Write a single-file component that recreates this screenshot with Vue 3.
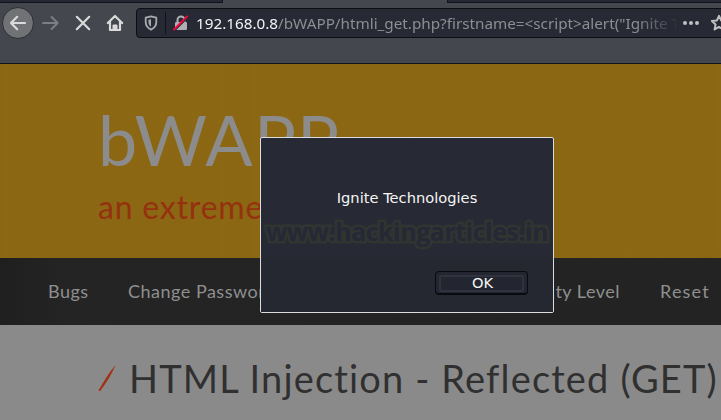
<template>
  <div class="screen">
    <div class="browser">
      <div class="tabs">
        <div class="tab"></div>
        <div class="tab active"></div>
        <div class="tab rest"></div>
      </div>
      <div class="toolbar">
        <button class="back">
          <svg width="18" height="16" viewBox="0 0 18 16">
            <path d="M16 8H2M8.2 1.8 2 8l6.2 6.2" />
          </svg>
        </button>
        <svg class="forward" width="18" height="16" viewBox="0 0 18 16">
          <path d="M1 8h14.6M9.6 2l6 6-6 6" />
        </svg>
        <svg class="stop" width="16" height="16" viewBox="0 0 16 16">
          <path d="M1.8 1.8l12.4 12.4M14.2 1.8 1.8 14.2" />
        </svg>
        <svg class="home" width="18" height="18" viewBox="0 0 18 18">
          <path d="M1.8 9 9 2l7.2 7M4 8v8h10V8" />
          <path class="door" d="M7 16v-5h4v5z" />
        </svg>
        <div class="urlbar">
          <svg class="shield" width="14" height="16" viewBox="0 0 14 16">
            <path class="line" d="M7 1.3 12.3 2.6V7c0 3.6-2 6-5.3 7.6C3.7 13 1.7 10.6 1.7 7V2.6z" />
            <path class="fill" d="M7 4.2v7.6C5.2 10.7 4.5 9 4.5 7V4.8z" />
          </svg>
          <span class="divider"></span>
          <svg class="lock" width="16" height="16" viewBox="0 0 16 16">
            <path class="shackle" d="M4.5 8V5a3.5 3.5 0 0 1 7 0v3" />
            <rect x="2" y="7" width="12" height="8" rx="1.2" />
            <path class="gap" d="M.6 16.2 15.6 1.2" />
            <path class="slash" d="M1 14.5 14.2 1.3" />
          </svg>
          <span class="url"><b>192.168.0.8</b>/bWAPP/htmli_get.php?firstname=&lt;script&gt;alert("Ignite T</span>
          <span class="dots"><i></i><i></i><i></i></span>
          <svg class="star" width="18" height="18" viewBox="0 0 18 18">
            <path d="M9 1.8 11.1 6.4l5 .6-3.7 3.4 1 5L9 12.9l-4.4 2.5 1-5L1.9 7l5-.6z" />
          </svg>
        </div>
      </div>
    </div>

    <header class="banner">
      <h1>bWAPP</h1>
      <p>an extremely buggy web app !</p>
    </header>

    <nav class="menu">
      <a v-for="item in menu" :key="item">{{ item }}</a>
    </nav>

    <main class="content">
      <svg width="18" height="28" viewBox="0 0 18 28">
        <path d="M.5 26.500C5 19 10.500 9 17.500 1 14 10 8 19 2 27.200z" />
      </svg>
      <h2>HTML Injection - Reflected (GET)</h2>
    </main>

    <div class="dialog">
      <div class="message">Ignite Technologies</div>
      <div class="watermark">www.hackingarticles.in</div>
      <div class="actions">
        <button class="ok"><span>OK</span></button>
      </div>
    </div>
  </div>
</template>

<script setup>
const menu = ['Bugs', 'Change Password', 'Create User', 'Set Security Level', 'Reset']
</script>

<style>
body {
  margin: 0;
  overflow: hidden;
}
</style>

<style scoped>
.screen {
  position: relative;
  width: 721px;
  height: 420px;
  overflow: hidden;
  font-family: Lato, 'Open Sans', sans-serif;
}

button {
  padding: 0;
  box-sizing: border-box;
}

svg {
  display: block;
  flex: none;
  fill: none;
  stroke-linecap: round;
  stroke-linejoin: round;
}

.browser {
  height: 64px;
  box-sizing: border-box;
  background: #44474e;
  border-bottom: 1px solid #11131a;
}

.tabs {
  display: flex;
  height: 3px;
}

.tab {
  box-sizing: border-box;
  width: 223px;
  background: #252832;
  border-right: 1px solid #11131a;
  border-bottom: 1px solid #11131a;
}

.tab.active {
  width: 224px;
  background: #44474e;
  border: none;
}

.tab.rest {
  flex: 1;
  border-left: 1px solid #11131a;
  border-right: none;
}

.toolbar {
  display: flex;
  align-items: center;
  height: 40px;
  padding-left: 2px;
}

.back {
  display: flex;
  flex: none;
  align-items: center;
  justify-content: center;
  width: 32px;
  height: 32px;
  border: 1px solid #2c2e34;
  border-radius: 50%;
  background: #707276;
}

.back svg,
.stop {
  stroke: #dadada;
  stroke-width: 2.2;
}

.forward {
  margin-left: 8px;
  stroke: #7c7e82;
  stroke-width: 2;
}

.stop {
  margin-left: 15px;
}

.home {
  margin-left: 15px;
  stroke: #dadada;
  stroke-width: 2.2;
}

.home .door {
  fill: #dadada;
  stroke-width: 1;
}

.urlbar {
  display: flex;
  align-items: center;
  flex: none;
  box-sizing: border-box;
  width: 620px;
  height: 30px;
  margin-left: 12px;
  padding-left: 7px;
  border: 1px solid #0c0e14;
  border-radius: 4px;
  background: #272934;
}

.shield .line {
  stroke: #aaabae;
  stroke-width: 1.8;
}

.shield .fill {
  fill: #aaabae;
}

.divider {
  width: 1px;
  height: 22px;
  margin: 0 7px;
  background: #11131a;
}

.lock {
  fill: #b0b0b3;
}

.lock .shackle {
  fill: none;
  stroke: #b0b0b3;
  stroke-width: 2;
}

.lock .gap {
  stroke: #272934;
  stroke-width: 2;
}

.lock .slash {
  stroke: #f5093f;
  stroke-width: 1.9;
}

.url {
  flex: none;
  width: 480px;
  margin-left: 7px;
  white-space: nowrap;
  font: 15.25px/26px 'Noto Sans', sans-serif;
  color: #8d8e93;
  -webkit-mask-image: linear-gradient(to right, #000 440px, transparent 484px);
  mask-image: linear-gradient(to right, #000 440px, transparent 484px);
}

.url b {
  font-weight: 400;
  color: #f4f4f5;
}

.dots {
  display: flex;
  gap: 2px;
  margin-left: 7px;
}

.dots i {
  width: 4px;
  height: 4px;
  border-radius: 50%;
  background: #c0c0c2;
}

.star {
  margin-left: 11px;
  stroke: #c0c0c2;
  stroke-width: 2;
}

.banner {
  box-sizing: border-box;
  height: 194px;
  padding: 33px 0 0 98px;
  background: repeating-linear-gradient(
    to right,
    #8b6714 0,
    #8c6814 7px,
    #8b6613 19px,
    #8b6714 31px
  );
}

h1 {
  margin: 0;
  font-size: 70px;
  font-weight: 400;
  line-height: 84px;
  letter-spacing: 1.2px;
  color: #8c8c8c;
}

.banner p {
  margin: 6px 0 0;
  font-size: 32px;
  line-height: 40px;
  letter-spacing: 0.8px;
  white-space: nowrap;
  color: #95310f;
}

.menu {
  display: grid;
  grid-template-columns: 40px 142px 100px 170px 50px;
  column-gap: 40px;
  box-sizing: border-box;
  width: 721px;
  height: 67px;
  padding-left: 48px;
  background: linear-gradient(to right, #1f1f1f, #242424 60px, #232323);
  font-size: 18px;
  line-height: 66px;
  letter-spacing: 0.5px;
  white-space: nowrap;
  color: #8f8f8f;
}

.menu a:nth-child(4) {
  text-align: right;
}

.menu a:nth-child(5) {
  letter-spacing: 1.2px;
}

.content {
  display: flex;
  align-items: flex-start;
  height: 95px;
  background: #8a8a8a;
}

.content svg {
  margin: 39px 0 0 98px;
  fill: #a23010;
}

h2 {
  margin: 29px 0 0 13px;
  font-size: 38px;
  font-weight: 400;
  line-height: 48px;
  letter-spacing: 1.15px;
  white-space: nowrap;
  color: #303030;
}

.dialog {
  position: absolute;
  left: 260px;
  top: 137px;
  display: flex;
  flex-direction: column;
  box-sizing: border-box;
  width: 294px;
  height: 176px;
  border: 1px solid #dcdde0;
  border-radius: 2px;
  background: #272934;
}

.message {
  padding-top: 50px;
  font: 14.67px/20px 'DejaVu Sans', sans-serif;
  text-align: center;
  color: #f5f5f5;
}

.watermark {
  margin-top: 6px;
  font: 700 25px/34px 'Open Sans', sans-serif;
  letter-spacing: -0.5px;
  text-align: center;
  white-space: nowrap;
  color: #262835;
  -webkit-text-stroke: 5px #303531;
  paint-order: stroke fill;
  stroke-linejoin: round;
}

.actions {
  display: flex;
  justify-content: flex-end;
  flex: 1;
  margin-top: 9px;
  padding: 14px 25px 0 0;
  background: #252831;
}

.ok {
  width: 93px;
  height: 24px;
  padding: 3px;
  border: 1px solid #090b10;
  border-bottom-width: 2px;
  border-radius: 4px;
  background: #232630;
}

.ok span {
  display: block;
  box-sizing: border-box;
  height: 17px;
  border: 2px solid #30333c;
  border-radius: 2px;
  padding-left: 2px;
  font: 14.67px/11px 'DejaVu Sans', sans-serif;
  color: #f5f5f5;
}
</style>
